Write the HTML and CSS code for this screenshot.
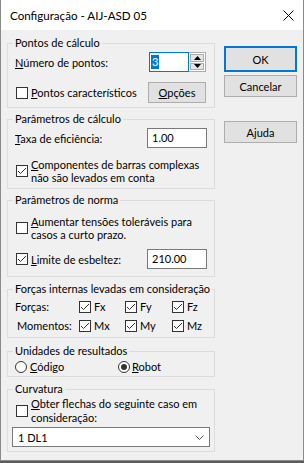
FILE: index.html
```html
<!DOCTYPE html>
<html lang="pt">
	<head>
		<meta charset="UTF-8" />
		<meta name="viewport" content="width=device-width, initial-scale=1.0" />
		<title>Configuração - AIJ-ASD 05</title>
		<link rel="stylesheet" href="styles.css">
	</head>
	<body>
		<div class="window">
			<div class="titlebar">
				<span class="title">Configuração - AIJ-ASD 05</span>
				<svg class="close" width="11" height="11" viewBox="0 0 11 11">
					<path d="M0.5 0.5 L10.5 10.5 M10.5 0.5 L0.5 10.5" stroke="#000" stroke-width="1" fill="none" />
				</svg>
			</div>
			<div class="content">
				<div class="groups">
					<fieldset class="group group-pontos">
						<legend>Pontos de cálculo</legend>
						<div class="row row-num">
							<span><u>N</u>úmero de pontos:</span>
							<div class="spin">
								<span class="spin-field"><span class="selected">3</span></span>
								<span class="spin-btns">
									<span class="spin-btn"><svg width="7" height="4" viewBox="0 0 7 4"><path d="M3.5 0 L7 4 L0 4 Z" fill="#000" /></svg></span>
									<span class="spin-btn"><svg width="7" height="4" viewBox="0 0 7 4"><path d="M0 0 L7 0 L3.5 4 Z" fill="#000" /></svg></span>
								</span>
							</div>
						</div>
						<div class="row row-opt">
							<label class="check">
								<svg class="box" width="12" height="12" viewBox="0 0 12 12"><rect x="0.5" y="0.5" width="11" height="11" fill="#fff" stroke="#333" /></svg>
								<span><u>P</u>ontos característicos</span>
							</label>
							<button class="btn btn-small"><u>O</u>pções</button>
						</div>
					</fieldset>

					<fieldset class="group group-calc">
						<legend>Parâmetros de cálculo</legend>
						<div class="row row-taxa">
							<span><u>T</u>axa de eficiência:</span>
							<span class="field">1.00</span>
						</div>
						<label class="check check-multi check-comp">
							<svg class="box" width="12" height="12" viewBox="0 0 12 12"><rect x="0.5" y="0.5" width="11" height="11" fill="#fff" stroke="#333" /><path d="M2 6 L4.5 8.5 L10 3" fill="none" stroke="#333" /></svg>
							<span><u>C</u>omponentes de barras complexas<br>não são levados em conta</span>
						</label>
					</fieldset>

					<fieldset class="group group-norma">
						<legend>Parâmetros de norma</legend>
						<label class="check check-multi check-tens">
							<svg class="box" width="12" height="12" viewBox="0 0 12 12"><rect x="0.5" y="0.5" width="11" height="11" fill="#fff" stroke="#333" /></svg>
							<span><u>A</u>umentar tensões toleráveis para<br>casos a curto prazo.</span>
						</label>
						<div class="row row-limite">
							<label class="check">
								<svg class="box" width="12" height="12" viewBox="0 0 12 12"><rect x="0.5" y="0.5" width="11" height="11" fill="#fff" stroke="#333" /><path d="M2 6 L4.5 8.5 L10 3" fill="none" stroke="#333" /></svg>
								<span><u>L</u>imite de esbeltez:</span>
							</label>
							<span class="field">210.00</span>
						</div>
					</fieldset>

					<fieldset class="group group-forcas">
						<legend>Forças internas levadas em consideração</legend>
						<div class="forces">
							<span class="force-label">Forças:</span>
							<label class="check"><svg class="box" width="12" height="12" viewBox="0 0 12 12"><rect x="0.5" y="0.5" width="11" height="11" fill="#fff" stroke="#333" /><path d="M2 6 L4.5 8.5 L10 3" fill="none" stroke="#333" /></svg><span>Fx</span></label>
							<label class="check"><svg class="box" width="12" height="12" viewBox="0 0 12 12"><rect x="0.5" y="0.5" width="11" height="11" fill="#fff" stroke="#333" /><path d="M2 6 L4.5 8.5 L10 3" fill="none" stroke="#333" /></svg><span>Fy</span></label>
							<label class="check"><svg class="box" width="12" height="12" viewBox="0 0 12 12"><rect x="0.5" y="0.5" width="11" height="11" fill="#fff" stroke="#333" /><path d="M2 6 L4.5 8.5 L10 3" fill="none" stroke="#333" /></svg><span>Fz</span></label>
							<span class="force-label force-label-mom">Momentos:</span>
							<label class="check"><svg class="box" width="12" height="12" viewBox="0 0 12 12"><rect x="0.5" y="0.5" width="11" height="11" fill="#fff" stroke="#333" /><path d="M2 6 L4.5 8.5 L10 3" fill="none" stroke="#333" /></svg><span>Mx</span></label>
							<label class="check"><svg class="box" width="12" height="12" viewBox="0 0 12 12"><rect x="0.5" y="0.5" width="11" height="11" fill="#fff" stroke="#333" /><path d="M2 6 L4.5 8.5 L10 3" fill="none" stroke="#333" /></svg><span>My</span></label>
							<label class="check"><svg class="box" width="12" height="12" viewBox="0 0 12 12"><rect x="0.5" y="0.5" width="11" height="11" fill="#fff" stroke="#333" /><path d="M2 6 L4.5 8.5 L10 3" fill="none" stroke="#333" /></svg><span>Mz</span></label>
						</div>
					</fieldset>

					<fieldset class="group group-unid">
						<legend>Unidades de resultados</legend>
						<div class="radios">
							<label class="radio">
								<svg width="12" height="12" viewBox="0 0 12 12"><circle cx="6" cy="6" r="5.5" fill="#fff" stroke="#333" /></svg>
								<span><u>C</u>ódigo</span>
							</label>
							<label class="radio radio-robot">
								<svg width="12" height="12" viewBox="0 0 12 12"><circle cx="6" cy="6" r="5.5" fill="#fff" stroke="#333" /><circle cx="6" cy="6" r="3" fill="#333" /></svg>
								<span><u>R</u>obot</span>
							</label>
						</div>
					</fieldset>

					<fieldset class="group group-curv">
						<legend>Curvatura</legend>
						<label class="check check-multi check-obter">
							<svg class="box" width="12" height="12" viewBox="0 0 12 12"><rect x="0.5" y="0.5" width="11" height="11" fill="#fff" stroke="#333" /></svg>
							<span><u>O</u>bter flechas do seguinte caso em<br>consideração:</span>
						</label>
						<div class="select">
							<span>1 DL1</span>
							<svg width="9" height="5" viewBox="0 0 9 5"><path d="M0.5 0.5 L4.5 4.5 L8.5 0.5" fill="none" stroke="#555" /></svg>
						</div>
					</fieldset>
				</div>

				<div class="buttons">
					<button class="btn btn-default">OK</button>
					<button class="btn">Cancelar</button>
					<button class="btn btn-help">Ajuda</button>
				</div>
			</div>
		</div>
	</body>
</html>
```

FILE: styles.css
```css
/* Windows style dialog */
body {
	margin: 0;
	padding: 0;
	background-color: #5c5c5c;
	font-family: Lato, "Liberation Sans", sans-serif;
	font-size: 11px;
	color: #000;
}
.window {
	width: 304px;
	height: 461px;
	box-sizing: border-box;
	border: 1px solid #8a8a8a;
	border-top: none;
	background-color: #f0f0f0;
	white-space: nowrap;
	overflow: hidden;
}
.titlebar {
	height: 30px;
	background-color: #fff;
	display: flex;
	align-items: center;
	justify-content: space-between;
	padding: 0 9px 0 9px;
}
.title {
	font-size: 11.6px;
}
.close {
	margin-top: 1px;
}
.content {
	display: flex;
	padding: 6px 0 0 6px;
}
.groups {
	width: 208px;
	flex-shrink: 0;
	display: flex;
	flex-direction: column;
}
.group {
	margin: 0;
	border: 1px solid #dcdcdc;
	padding: 0 7px 4px 7px;
	min-width: 0;
}
.group + .group {
	margin-top: 4px;
}
legend {
	padding: 0 2px;
	margin-left: -2px;
	line-height: 14px;
}
u {
	text-decoration-thickness: 1px;
	text-underline-offset: 1px;
}
.row {
	display: flex;
	align-items: center;
	justify-content: space-between;
	height: 20px;
}
.check,
.radio {
	display: flex;
	align-items: center;
}
.check .box,
.radio svg {
	margin: 0 3px 0 1px;
	flex-shrink: 0;
}
.check-multi {
	line-height: 13px;
}

/* Pontos de calculo */
.row-num {
	margin-top: 2px;
}
.spin {
	display: flex;
	width: 57px;
	height: 20px;
	margin-right: 1px;
}
.spin-field {
	flex: 1;
	background-color: #fff;
	border: 1px solid #0078d7;
	display: flex;
	align-items: center;
	padding-left: 1px;
}
.selected {
	background-color: #0078d7;
	color: #fff;
	padding: 0 1px;
	line-height: 14px;
}
.spin-btns {
	width: 17px;
	display: flex;
	flex-direction: column;
	border: 1px solid #adadad;
	border-left: none;
	box-sizing: border-box;
	background-color: #fff;
	padding: 1px;
	gap: 1px;
}
.spin-btn {
	flex: 1;
	background-color: #e5e5e5;
	border: 1px solid #adadad;
	display: flex;
	align-items: center;
	justify-content: center;
}
.row-opt {
	margin-top: 10px;
	height: 21px;
}
.btn {
	font-family: inherit;
	font-size: 11px;
	background-color: #e1e1e1;
	border: 1px solid #adadad;
	padding: 0;
	color: #000;
}
.btn-small {
	width: 58px;
	height: 21px;
	margin-right: 1px;
}

/* Parametros de calculo */
.row-taxa {
	margin-top: 2px;
}
.field {
	width: 60px;
	height: 20px;
	box-sizing: border-box;
	background-color: #fff;
	border: 1px solid #7a7a7a;
	padding-left: 4px;
	line-height: 18px;
}
.check-comp {
	margin-top: 10px;
}

/* Parametros de norma */
.check-tens {
	margin-top: 8px;
}
.row-limite {
	margin-top: 8px;
}
.group-norma {
	padding-bottom: 7px;
}

/* Forcas internas */
.group-forcas {
	margin-top: 5px !important;
	padding-bottom: 2px;
}
.forces {
	display: grid;
	grid-template-columns: 63px 46px 47px auto;
	grid-auto-rows: 19px;
	align-items: center;
	margin-top: 1px;
}
.force-label-mom {
	margin-left: 2px;
}

/* Unidades */
.group-unid {
	margin-top: 6px !important;
	padding-bottom: 1px;
}
.radios {
	display: grid;
	grid-template-columns: 103px auto;
	height: 17px;
	align-items: center;
}
.radio svg {
	margin-left: 0;
}
.radio-robot svg {
	margin-right: 2px;
}

/* Curvatura */
.group-curv {
	margin-top: 5px !important;
	padding-bottom: 4px;
}
.check-obter {
	margin-top: 1px;
	line-height: 14px;
}
.select {
	margin: 2px 0 0 -3px;
	width: 198px;
	height: 20px;
	box-sizing: border-box;
	background-color: #fff;
	border: 1px solid #7a7a7a;
	display: flex;
	align-items: center;
	justify-content: space-between;
	padding: 0 5px 0 5px;
}

/* Buttons on the right */
.buttons {
	display: flex;
	flex-direction: column;
	margin-left: 9px;
	padding-top: 10px;
}
.buttons .btn {
	width: 73px;
	height: 22px;
}
.buttons .btn-default {
	height: 26px;
	border: 2px solid #0078d7;
	margin-bottom: 3px;
}
.buttons .btn-help {
	margin-top: 24px;
}
```
